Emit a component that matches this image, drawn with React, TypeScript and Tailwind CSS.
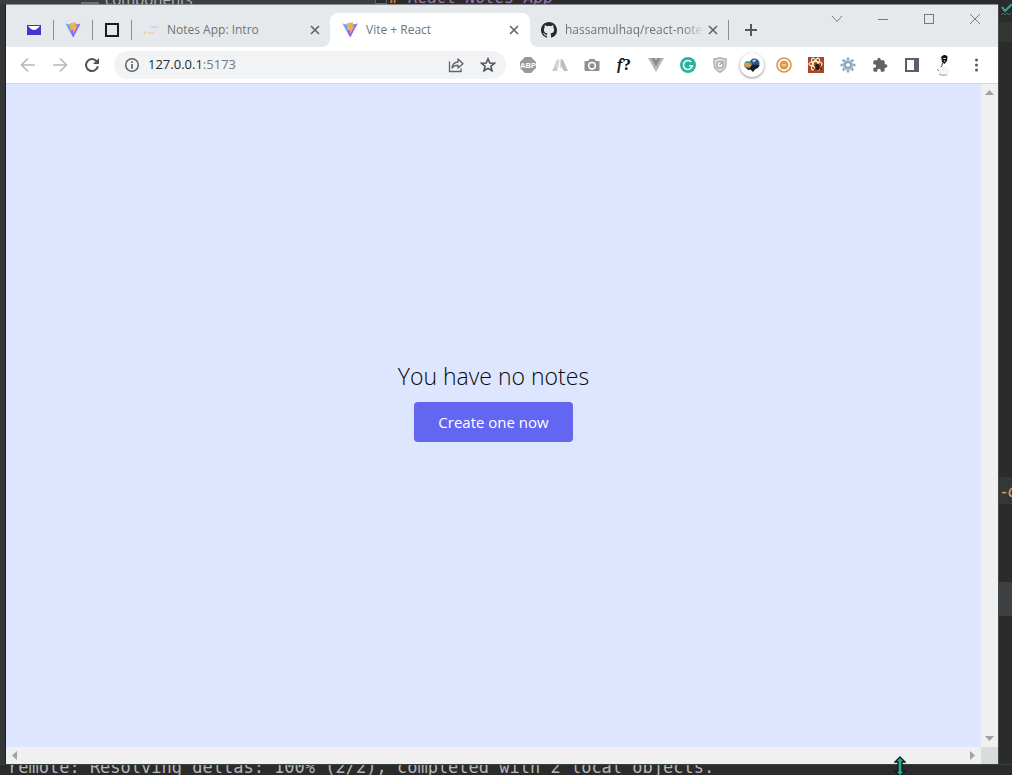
import type { ReactNode } from "react";

function ViteLogo() {
  return (
    <svg viewBox="0 0 16 16" className="size-4 shrink-0" aria-hidden="true">
      <defs>
        <linearGradient id="vite-v" x1="0" y1="0" x2="1" y2="1">
          <stop offset="0" stopColor="#5cc8fa" />
          <stop offset="0.55" stopColor="#8b6cf6" />
          <stop offset="1" stopColor="#8a4df0" />
        </linearGradient>
      </defs>
      <path d="M0.3 1.6 L8 3.1 L15.7 1.6 L8.2 15.6 Z" fill="url(#vite-v)" />
      <path d="M5 1.2 L11.2 0.2 L10.4 4.2 L12.4 4 L8 12.2 L8.3 7.8 L5.2 8.2 Z" fill="#edb14f" />
    </svg>
  );
}

function GithubMark() {
  return (
    <svg viewBox="0 0 16 16" className="size-4 shrink-0" fill="#24292f" aria-hidden="true">
      <path d="M8 0C3.58 0 0 3.58 0 8c0 3.54 2.29 6.53 5.47 7.59.4.07.55-.17.55-.38 0-.19-.01-.82-.01-1.49-2.01.37-2.53-.49-2.69-.94-.09-.23-.48-.94-.82-1.13-.28-.15-.68-.52-.01-.53.63-.01 1.08.58 1.23.82.72 1.21 1.87.87 2.33.66.07-.52.28-.87.51-1.07-1.78-.2-3.64-.89-3.64-3.95 0-.87.31-1.59.82-2.15-.08-.2-.36-1.02.08-2.12 0 0 .67-.21 2.2.82a7.6 7.6 0 0 1 4 0c1.53-1.04 2.2-.82 2.2-.82.44 1.1.16 1.92.08 2.12.51.56.82 1.27.82 2.15 0 3.07-1.87 3.75-3.65 3.95.29.25.54.73.54 1.48 0 1.07-.01 1.93-.01 2.2 0 .21.15.46.55.38A8.01 8.01 0 0 0 16 8c0-4.42-3.58-8-8-8z" />
    </svg>
  );
}

function CloseTab({ label }: { label: string }) {
  return (
    <button aria-label={label} className="flex size-4 shrink-0 items-center justify-center">
      <svg viewBox="0 0 10 10" className="size-2.5" stroke="#5f6368" strokeWidth="1.6" aria-hidden="true">
        <path d="M1 1 L9 9 M9 1 L1 9" />
      </svg>
    </button>
  );
}

function Divider() {
  return <span className="h-5 w-px shrink-0 bg-[#8c8f92]" />;
}

function PinnedTab({ label, children }: { label: string; children: ReactNode }) {
  return (
    <button aria-label={label} className="flex h-full w-[38px] shrink-0 items-center justify-center">
      {children}
    </button>
  );
}

function TabStrip() {
  return (
    <header className="flex h-[42px] shrink-0 bg-white text-xs text-[#6f7478]">
      <div className="flex w-[324px] shrink-0 items-center rounded-br-lg bg-[#e6e9ec] pt-2 pl-[9px]">
        <PinnedTab label="Mail">
          <svg viewBox="0 0 14 10" className="h-2.5 w-3.5" aria-hidden="true">
            <rect width="14" height="10" fill="#4c2fd0" />
            <path d="M1 1 H13 L10 4 Q7 6 4 4 Z" fill="#fff" />
          </svg>
        </PinnedTab>
        <Divider />
        <PinnedTab label="Vite"><ViteLogo /></PinnedTab>
        <Divider />
        <PinnedTab label="Blank app">
          <svg viewBox="0 0 14 14" className="size-3.5" fill="none" aria-hidden="true">
            <rect x="1" y="1" width="12" height="12" stroke="#21191c" strokeWidth="2" />
          </svg>
        </PinnedTab>
        <Divider />
        <div className="flex min-w-0 flex-1 items-center pr-[7px] pl-[11px]">
          <svg viewBox="0 0 16 16" className="size-4 shrink-0" aria-hidden="true">
            <path d="M8 4 H15 L16 6 H7 Z" fill="#c2dafa" />
            <path d="M0 11 H3 M1.5 9.5 V12.5" stroke="#ecd09c" />
            <path d="M5 10 H12 L11 12 H4 Z" fill="#eed9b4" />
          </svg>
          <span className="ml-2 flex-1 truncate">Notes App: Intro</span>
          <CloseTab label="Close Notes App: Intro" />
        </div>
      </div>
      <div className="w-[200px] shrink-0 bg-[#e6e9ec] pt-2">
        <div className="flex h-full items-center rounded-t-lg bg-white pr-2 pl-3">
          <ViteLogo />
          <span className="ml-2 flex-1 truncate">Vite + React</span>
          <CloseTab label="Close Vite + React" />
        </div>
      </div>
      <div className="flex min-w-0 flex-1 rounded-bl-lg bg-[#e6e9ec]">
        <div className="flex w-[198px] shrink-0 items-center pt-2 pr-[7px] pl-[11px]">
          <GithubMark />
          <span className="ml-2 flex-1 overflow-hidden whitespace-nowrap [mask-image:linear-gradient(to_right,black_85%,transparent)]">
            hassamulhaq/react-notes
          </span>
          <CloseTab label="Close hassamulhaq/react-notes" />
        </div>
        <div className="flex items-center pt-2"><Divider /></div>
        <button aria-label="New tab" className="flex w-11 shrink-0 items-center justify-center pt-2">
          <svg viewBox="0 0 12 12" className="size-3" stroke="#55595d" strokeWidth="2" aria-hidden="true">
            <path d="M6 0 V12 M0 6 H12" />
          </svg>
        </button>
        <div className="ml-auto flex h-7 shrink-0 items-center">
          <button aria-label="Search tabs" className="flex w-[46px] justify-center">
            <svg viewBox="0 0 12 12" className="size-3" fill="none" stroke="#777a7d" aria-hidden="true"><path d="M1 3 L6 8.5 L11 3" /></svg>
          </button>
          <button aria-label="Minimize" className="flex w-[46px] justify-center">
            <svg viewBox="0 0 12 12" className="size-3" fill="none" stroke="#777a7d" aria-hidden="true"><path d="M1 6.5 H11" /></svg>
          </button>
          <button aria-label="Maximize" className="flex w-[46px] justify-center">
            <svg viewBox="0 0 12 12" className="size-3" fill="none" stroke="#777a7d" aria-hidden="true"><rect x="1.5" y="1.5" width="9" height="9" /></svg>
          </button>
          <button aria-label="Close window" className="flex w-[46px] justify-center">
            <svg viewBox="0 0 12 12" className="size-3" fill="none" stroke="#777a7d" aria-hidden="true"><path d="M1 1 L11 11 M11 1 L1 11" /></svg>
          </button>
        </div>
      </div>
    </header>
  );
}

function ToolButton({ label, children, raised = false }: { label: string; children: ReactNode; raised?: boolean }) {
  return (
    <button aria-label={label} className="flex w-8 shrink-0 items-center justify-center">
      <span className={raised ? "flex size-6 items-center justify-center rounded-full bg-white shadow-[0_1px_3px_rgba(0,0,0,0.45)]" : "flex items-center justify-center"}>
        <svg viewBox="0 0 16 16" className="size-4" fill="none" aria-hidden="true">{children}</svg>
      </span>
    </button>
  );
}

function Toolbar() {
  return (
    <div className="flex h-9 shrink-0 items-center bg-white pl-1.5">
      <ToolButton label="Back"><path d="M15 8 H2 M8 1.5 L1.5 8 L8 14.5" stroke="#b7b9bc" strokeWidth="1.7" /></ToolButton>
      <ToolButton label="Forward"><path d="M1 8 H14 M8 1.5 L14.5 8 L8 14.5" stroke="#b7b9bc" strokeWidth="1.7" /></ToolButton>
      <ToolButton label="Reload">
        <path d="M12.7 4.3 A6 6 0 1 0 13.9 9.2" stroke="#505459" strokeWidth="2" />
        <path d="M15 1 V7 H9 Z" fill="#505459" />
      </ToolButton>
      <div className="ml-1.5 flex h-7 min-w-0 flex-1 items-center rounded-full bg-[#f1f3f4] pr-0.5 pl-2.5">
        <svg viewBox="0 0 16 16" className="size-4 shrink-0" fill="none" stroke="#5f6368" aria-hidden="true">
          <circle cx="8" cy="8" r="6.3" strokeWidth="1.5" />
          <path d="M8 7 V11.7 M8 4.3 V5.9" strokeWidth="1.7" />
        </svg>
        <a href="http://127.0.0.1:5173" className="ml-2 flex-1 truncate text-[13px] text-[#747a80]">
          <span className="text-[#27292c]">127.0.0.1</span>:5173
        </a>
        <ToolButton label="Share">
          <path d="M1.5 4.5 V14.5 H13 V11.5" stroke="#5f6368" strokeWidth="1.3" />
          <path d="M4 11 Q4.5 5.5 10 5 V2 L15 6.8 L10 11 V8.3 Q6.3 8 4 11 Z" stroke="#5f6368" strokeWidth="1.3" strokeLinejoin="round" />
        </ToolButton>
        <ToolButton label="Bookmark">
          <path d="M8 1.8 L9.8 6 L14.3 6.3 L10.9 9.2 L12 13.8 L8 11.4 L4 13.8 L5.1 9.2 L1.7 6.3 L6.2 6 Z" stroke="#505459" strokeWidth="1.6" />
        </ToolButton>
      </div>
      <div className="ml-1.5 flex shrink-0 items-center pr-1.5">
        <ToolButton label="Adblock Plus">
          <path d="M5 0 H11 L16 5 V11 L11 16 H5 L0 11 V5 Z" fill="#999" />
          <text x="8" y="10.8" fontSize="7.5" fontWeight="700" textAnchor="middle" fill="#fff" className="font-['Liberation_Sans',sans-serif]">ABP</text>
        </ToolButton>
        <ToolButton label="Web tool">
          <path d="M4.5 2.5 H7.5 L6.8 9 L4.5 14 H0.5 Z" fill="#d6d6d6" />
          <path d="M0 14 L3.5 8 L5.5 14 Z" fill="#c9c9c9" />
          <path d="M8.5 2.5 H11 L16 14 H12 L8.5 8 Z" fill="#bdbdbd" />
          <path d="M7.5 10 L8.5 8 L10 12 Z" fill="#d6d6d6" />
        </ToolButton>
        <ToolButton label="Screenshot">
          <path d="M1.5 4 H4.3 L5.5 2 H10.5 L11.7 4 H14.5 Q15.5 4 15.5 5 V13 Q15.5 14 14.5 14 H1.5 Q0.5 14 0.5 13 V5 Q0.5 4 1.5 4 Z" fill="#909090" />
          <circle cx="8" cy="8.8" r="3.3" stroke="#fff" strokeWidth="1.6" />
        </ToolButton>
        <ToolButton label="Font finder">
          <text x="8" y="13" fontSize="17" fontWeight="700" textAnchor="middle" fill="#080808" className="font-['Liberation_Serif',serif]">
            <tspan fontStyle="italic" fontWeight="400" stroke="#080808" strokeWidth="0.5">f</tspan><tspan dx="1">?</tspan>
          </text>
        </ToolButton>
        <ToolButton label="Vue devtools">
          <path d="M0 1 H16 L8 15 Z" fill="#b7b7b7" />
          <path d="M3.3 1 H6.2 L8 4 L9.8 1 H12.7 L8 9.2 Z" fill="#858585" />
        </ToolButton>
        <ToolButton label="Grammarly">
          <circle cx="8" cy="8" r="8" fill="#29b59d" />
          <path d="M11.3 4.9 A4.5 4.5 0 1 0 12.4 8.7 H9" stroke="#fff" strokeWidth="1.5" />
        </ToolButton>
        <ToolButton label="Tracker shield">
          <path d="M8 0.6 Q11 2 14 2 V7 Q14 12 8 15.4 Q2 12 2 7 V2 Q5 2 8 0.6 Z" fill="#dedfe0" stroke="#a9abad" strokeWidth="1.3" />
          <circle cx="8" cy="7.7" r="3.3" fill="#f2f2f2" stroke="#a4a6a8" strokeWidth="1.4" />
          <path d="M7.5 8 L11.5 4" stroke="#a4a6a8" strokeWidth="1.2" />
        </ToolButton>
        <ToolButton label="Download manager" raised>
          <circle cx="10.5" cy="6.5" r="5" fill="#2f568c" />
          <path d="M8 4 Q10 1.5 12.5 3 L10 5.5 Z" fill="#b5cfe0" />
          <path d="M1 5 Q5 2 8.5 7 L6 12 Q0 12 0 8 Z" fill="#49948d" />
          <path d="M0 7 Q4 4 7.5 8.5 L5.5 11 Q3 8.5 0.5 10 Z" fill="#e69544" />
          <path d="M2 10.5 L5 11.5 L8.5 7.5 L15.5 8 Q15 11 11.5 12 L9 15 L6.5 12.5 L4 13 Z" fill="#17202b" />
        </ToolButton>
        <ToolButton label="Cookie manager">
          <circle cx="8" cy="8" r="7" stroke="#dc9b55" strokeWidth="1.7" />
          <circle cx="8" cy="8" r="4.5" fill="#dc9b55" />
          <path d="M6 8 H10" stroke="#fff6e9" />
        </ToolButton>
        <ToolButton label="React devtools">
          <rect width="16" height="16" fill="#a94923" />
          <g stroke="#fff0e5" strokeWidth="1.2">
            <ellipse cx="7.5" cy="7" rx="6.5" ry="2.5" />
            <ellipse cx="7.5" cy="7" rx="6.5" ry="2.5" transform="rotate(60 7.5 7)" />
            <ellipse cx="7.5" cy="7" rx="6.5" ry="2.5" transform="rotate(120 7.5 7)" />
          </g>
          <ellipse cx="9.5" cy="10" rx="2.3" ry="3.3" fill="#311c14" />
          <path d="M6 8.5 L14 12.5 M6 13 L13 8" stroke="#311c14" />
        </ToolButton>
        <ToolButton label="Extension settings">
          <g stroke="#91abc7" strokeWidth="2.5">
            <path d="M8 0.5 V15.5 M0.5 8 H15.5 M2.7 2.7 L13.3 13.3 M13.3 2.7 L2.7 13.3" />
          </g>
          <circle cx="8" cy="8" r="5.2" fill="#a7bfdb" />
          <circle cx="8" cy="8" r="2.7" fill="#fff" stroke="#87949f" strokeWidth="1.2" />
        </ToolButton>
        <ToolButton label="Extensions">
          <path transform="scale(0.667)" d="M20.5 11H19V7c0-1.1-.9-2-2-2h-4V3.5C13 2.12 11.88 1 10.5 1S8 2.12 8 3.5V5H4c-1.1 0-1.99.9-1.99 2v3.8H3.5c1.49 0 2.7 1.21 2.7 2.7s-1.21 2.7-2.7 2.7H2V20c0 1.1.9 2 2 2h3.8v-1.5c0-1.49 1.21-2.7 2.7-2.7 1.49 0 2.7 1.21 2.7 2.7V22H17c1.1 0 2-.9 2-2v-4h1.5c1.38 0 2.5-1.12 2.5-2.5S21.88 11 20.5 11z" fill="#5f6368" />
        </ToolButton>
        <ToolButton label="Side panel">
          <rect x="1" y="1" width="14" height="14" fill="#5a6069" />
          <rect x="3" y="3" width="7" height="10" fill="#fff" />
        </ToolButton>
        <button aria-label="Profile" className="flex w-8 items-center justify-center">
          <svg viewBox="0 0 16 22" className="h-[22px] w-4" aria-hidden="true">
            <path d="M1 16 Q4 12 7 12 Q12 12 13.5 17 L13 21 Q8 23 3 19 Z" fill="#f6f6f6" />
            <path d="M1 15 L3 17 M3 20 L6 21.3 L11 21" stroke="#999" fill="none" />
            <path d="M5.2 3 Q8 -0.5 11.5 2.5 L11 7 L8.500 10 L6 8 Z" fill="#111" />
            <path d="M7.3 4 H9.8 V5 H7.3 Z M7.500 6.500 H9.500 L8.500 8 Z" fill="#e6e6e6" />
            <path d="M6.5 9 Q6 12 5 13" stroke="#333" fill="none" />
          </svg>
        </button>
        <ToolButton label="Menu">
          <circle cx="8.5" cy="3" r="1.5" fill="#55595e" />
          <circle cx="8.5" cy="8" r="1.5" fill="#55595e" />
          <circle cx="8.5" cy="13" r="1.5" fill="#55595e" />
        </ToolButton>
      </div>
    </div>
  );
}

function ScrollArrow({ label, path }: { label: string; path: string }) {
  return (
    <button aria-label={label} className="flex size-[17px] shrink-0 items-center justify-center">
      <svg viewBox="0 0 9 9" className="size-[9px]" fill="#a1a1a1" aria-hidden="true"><path d={path} /></svg>
    </button>
  );
}

function Browser() {
  return (
    <div className="flex min-w-0 flex-1 flex-col border-t border-[#898c8e] bg-white font-['Open_Sans','Noto_Sans',sans-serif]">
      <TabStrip />
      <Toolbar />
      <div className="flex min-h-0 flex-1 border-t border-[#d5d7dc]">
        <main className="flex min-w-0 flex-1 flex-col items-center justify-center gap-2.5 bg-[#dee5ff] pb-[30px]">
          <h1 className="text-[23px] leading-8 font-[350] text-[#08080a]">You have no notes</h1>
          <button className="h-10 rounded bg-[#6366f1] px-6 pt-px text-[15px] text-white">Create one now</button>
        </main>
        <div className="flex w-[17px] shrink-0 flex-col justify-between bg-[#f0f0f0]">
          <ScrollArrow label="Scroll up" path="M0 7 L4.5 2 L9 7 Z" />
          <ScrollArrow label="Scroll down" path="M0 2 L4.5 7 L9 2 Z" />
        </div>
      </div>
      <div className="flex h-[17px] shrink-0 bg-[#f0f0f0]">
        <div className="flex flex-1 justify-between">
          <ScrollArrow label="Scroll left" path="M7 0 L2 4.5 L7 9 Z" />
          <ScrollArrow label="Scroll right" path="M2 0 L7 4.5 L2 9 Z" />
        </div>
        <div className="w-[17px] bg-[#d9dcdc]" />
      </div>
    </div>
  );
}

export default function App() {
  return (
    <div className="relative flex h-screen flex-col overflow-hidden bg-[#2b2b2b] font-['DejaVu_Sans_Mono','Liberation_Mono',monospace] text-[#b4b6b8]">
      <div className="flex h-1 shrink-0 items-end overflow-hidden whitespace-nowrap">
        <div className="flex h-3 w-[375px] shrink-0 items-end bg-[#3c3f41] pl-[81px]">
          <span className="h-0.5 w-[18px] bg-[#667276]" />
          <span className="ml-1.5 font-['Open_Sans',sans-serif] text-[15px] leading-2.5">components</span>
        </div>
        <span className="size-3 shrink-0 border border-[#5b6462]" />
        <span className="ml-0.5 text-base leading-3 text-[#9876aa]"><b className="text-[#cc7832]">#</b> <i>React Notes App</i></span>
      </div>
      <div className="flex min-h-0 flex-1">
        <div className="w-1.5 shrink-0 border-r border-[#1d1e1f] bg-[#34373a]" />
        <Browser />
        <div className="flex w-3.5 shrink-0 flex-col overflow-hidden border-l border-[#454849]">
          <svg viewBox="0 0 13 14" className="h-3.5 w-[13px] shrink-0" fill="none" aria-hidden="true">
            <path d="M3 3 L6 7 L13 0" stroke="#43a19d" strokeWidth="2" />
            <path d="M2 11 L4 9 L6 11 L8 9 L10 11 L12 9" stroke="#40716c" />
          </svg>
          <div className="mt-1 h-5 shrink-0 bg-[#343432]" />
          <div className="flex-[434]" />
          <div className="flex h-[27px] shrink-0 items-center bg-[#333735] pt-1 text-[17px] whitespace-nowrap text-[#dfa75c]">
            -<i className="-ml-0.5">c</i>
          </div>
          <div className="flex-[78]" />
          <div className="h-[34px] shrink-0 bg-[#3d4144]" />
          <div className="flex-[148]" />
        </div>
      </div>
      <div className="flex h-[11px] shrink-0 items-end overflow-hidden border-t border-[#35403a] pl-2 text-[17px] leading-4 whitespace-pre">
        remote: Resolving deltas: 100% (2/2), completed with 2 local objects.
      </div>
      <svg viewBox="0 0 12 20" className="absolute right-[106px] -bottom-px h-5 w-3" aria-hidden="true">
        <path d="M6 1 L11 6 H8 V15 H11 L6 20 L1 15 H4 V6 H1 Z" fill="#24ad96" stroke="#101716" strokeWidth="1.3" />
      </svg>
    </div>
  );
}
